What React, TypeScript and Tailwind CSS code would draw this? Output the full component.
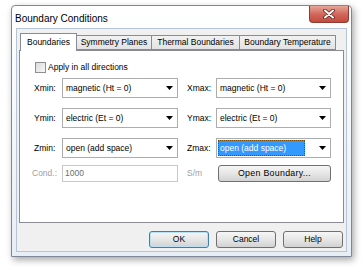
import React from "react";

const font = { fontFamily: '"Liberation Sans", Arial, sans-serif' };

function Arrow() {
  return (
    <svg width="7" height="4" viewBox="0 0 7 4" className="mr-[4px] shrink-0">
      <path d="M0 0 H7 L3.5 4 Z" fill="#000" />
    </svg>
  );
}

function Select({ value, focused }: { value: string; focused?: boolean }) {
  return (
    <div className="flex h-[20px] items-center border border-[#abadb3] bg-white">
      {focused ? (
        <div className="ml-[1px] mr-[14px] flex h-[16px] flex-1 items-center border border-dotted border-[#7a4a00] bg-[#3399ff] pl-[1px] text-white">
          {value}
        </div>
      ) : (
        <div className="flex-1 pl-[3px] text-black">{value}</div>
      )}
      <Arrow />
    </div>
  );
}

function Button({ label, def }: { label: string; def?: boolean }) {
  return (
    <div
      className={
        "flex h-[17px] w-[60px] items-center justify-center rounded-[3px] border bg-gradient-to-b from-[#f6f6f6] via-[#e6e6e6] to-[#d2d2d2] text-black " +
        (def ? "border-[#3c7fb1] shadow-[inset_0_0_0_1px_#b9e0f7]" : "border-[#707070]")
      }
    >
      {label}
    </div>
  );
}

function Tab({ label, w, active }: { label: string; w: string; active?: boolean }) {
  return (
    <div
      className={
        "flex items-center justify-center border border-[#898c95] text-black " +
        w +
        (active
          ? " relative z-10 -mb-px h-[18px] border-b-0 bg-white"
          : " -ml-px h-[15px] bg-gradient-to-b from-[#f2f2f2] to-[#e3e3e3]")
      }
    >
      {label}
    </div>
  );
}

export default function App() {
  return (
    <div className="h-[274px] w-[364px] bg-white pl-[11px] pt-[5px] text-[8.5px]" style={font}>
      <div className="flex h-[252px] w-[341px] flex-col rounded-t-[4px] border border-[#7c8897] bg-gradient-to-b from-[#ffffff] to-[#e8eef5] shadow-[2px_3px_7px_rgba(0,0,0,0.35)]">
        {/* title bar */}
        <div className="flex h-[22px] items-start justify-between">
          <span className="mt-[5px] pl-[3px] text-[10px] text-black">Boundary Conditions</span>
          <div className="mr-[2px] flex h-[17px] w-[40px] items-center justify-center rounded-b-[4px] border border-t-0 border-[#8f3b33] bg-gradient-to-b from-[#e8a69a] via-[#d2685c] to-[#c34a3c]">
            <svg width="12" height="10" viewBox="0 0 12 10">
              <path d="M2 1.5 L10 8.5 M10 1.5 L2 8.5" stroke="#5a1f18" strokeWidth="3.6" strokeLinecap="round" />
              <path d="M2 1.5 L10 8.5 M10 1.5 L2 8.5" stroke="#ffffff" strokeWidth="2" strokeLinecap="round" />
            </svg>
          </div>
        </div>

        {/* client area */}
        <div className="mx-[4px] mb-[4px] flex flex-1 flex-col border border-[#b5c4d6] bg-[#f0f0f0]">
          {/* tabs */}
          <div className="mt-[4px] flex items-end pl-[3px]">
            <Tab label="Boundaries" w="w-[57px]" active />
            <Tab label="Symmetry Planes" w="w-[76px]" />
            <Tab label="Thermal Boundaries" w="w-[89px]" />
            <Tab label="Boundary Temperature" w="w-[97px]" />
          </div>

          {/* panel */}
          <div className="mx-[2px] h-[173px] border border-[#898c95] bg-white pl-[14px] pt-[11px] text-black">
            <div className="ml-[1px] flex h-[11px] items-center gap-[2px]">
              <div className="h-[11px] w-[11px] border border-[#8e8f8f] bg-gradient-to-br from-[#dcdcdc] to-[#f7f7f7]" />
              <span>Apply in all directions</span>
            </div>

            <div className="mt-[5px] flex flex-col gap-[10px]">
              {[
                ["Xmin:", "magnetic (Ht = 0)", "Xmax:", "magnetic (Ht = 0)"],
                ["Ymin:", "electric (Et = 0)", "Ymax:", "electric (Et = 0)"],
                ["Zmin:", "open (add space)", "Zmax:", "open (add space)"],
              ].map((r, i) => (
                <div key={i} className="flex h-[20px] items-center">
                  <span className="w-[28px]">{r[0]}</span>
                  <div className="w-[116px]">
                    <Select value={r[1]} />
                  </div>
                  <span className="ml-[9px] w-[29px]">{r[2]}</span>
                  <div className="w-[115px]">
                    <Select value={r[3]} focused={i === 2} />
                  </div>
                </div>
              ))}

              <div className="-mt-[3px] flex h-[17px] items-center">
                <span className="-ml-[2px] w-[30px] text-[#a0a0a0]">Cond.:</span>
                <div className="flex h-[17px] w-[116px] items-center border border-[#c8c8c8] bg-white pl-[2px] text-[#6d6d6d]">
                  1000
                </div>
                <span className="ml-[9px] w-[31px] text-[#a0a0a0]">S/m</span>
                <div className="flex h-[17px] w-[113px] items-center justify-center rounded-[3px] border border-[#707070] bg-gradient-to-b from-[#f6f6f6] via-[#e6e6e6] to-[#d2d2d2] text-[8.8px] tracking-[0.3px]">
                  Open Boundary...
                </div>
              </div>
            </div>
          </div>

          {/* buttons */}
          <div className="mt-[8px] flex justify-end gap-[7px] pr-[3px]">
            <Button label="OK" def />
            <Button label="Cancel" />
            <Button label="Help" />
          </div>
        </div>
      </div>
    </div>
  );
}
